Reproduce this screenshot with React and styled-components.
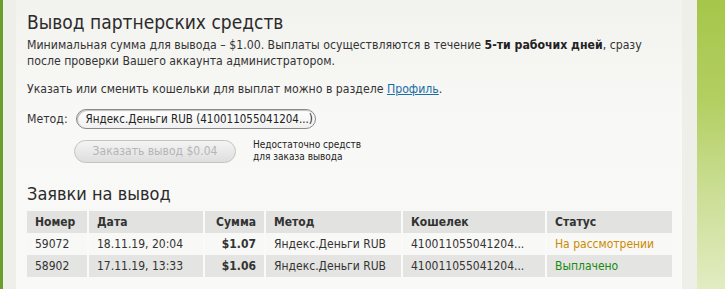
import styled, { createGlobalStyle } from "styled-components";

const GlobalStyle = createGlobalStyle`
  html, body {
    margin: 0;
    padding: 0;
    background: #efefea;
  }
  body {
    font-family: "DejaVu Sans Condensed", "DejaVu Sans", Verdana, sans-serif;
    font-size: 12.2px;
    color: #333;
  }
`;

const columns = [
  { title: "Номер", width: 61 },
  { title: "Дата", width: 116 },
  { title: "Сумма", width: 61, right: true },
  { title: "Метод", width: 137 },
  { title: "Кошелек", width: 144 },
  { title: "Статус", width: 126 },
];

const requests = [
  {
    id: "59072",
    date: "18.11.19, 20:04",
    sum: "$1.07",
    method: "Яндекс.Деньги RUB",
    wallet: "410011055041204...",
    status: "На рассмотрении",
    state: "pending",
  },
  {
    id: "58902",
    date: "17.11.19, 13:33",
    sum: "$1.06",
    method: "Яндекс.Деньги RUB",
    wallet: "410011055041204...",
    status: "Выплачено",
    state: "paid",
  },
];

export default function App() {
  return (
    <>
      <GlobalStyle />
      <Page>
        <LeftEdge />
        <Gutter />
        <Panel>
          <Title>Вывод партнерских средств</Title>
          <Text>
            Минимальная сумма для вывода – $1.00. Выплаты осуществляются в
            течение <b>5-ти рабочих дней</b>, сразу после проверки Вашего
            аккаунта администратором.
          </Text>
          <Text>
            Указать или сменить кошельки для выплат можно в разделе{" "}
            <Link href="#">Профиль</Link>.
          </Text>
          <MethodRow>
            <span>Метод:</span>
            <Select>Яндекс.Деньги RUB (410011055041204...)</Select>
          </MethodRow>
          <OrderRow>
            <OrderButton disabled>Заказать вывод $0.04</OrderButton>
            <Note>
              Недостаточно средств
              <br />
              для заказа вывода
            </Note>
          </OrderRow>
          <SubTitle>Заявки на вывод</SubTitle>
          <Table>
            <colgroup>
              {columns.map((c) => (
                <col key={c.title} style={{ width: c.width }} />
              ))}
            </colgroup>
            <thead>
              <tr>
                {columns.map((c) => (
                  <Th key={c.title} $right={c.right}>
                    {c.title}
                  </Th>
                ))}
              </tr>
            </thead>
            <tbody>
              {requests.map((r, i) => (
                <Row key={r.id} $odd={i % 2 === 1}>
                  <Td>{r.id}</Td>
                  <Td>{r.date}</Td>
                  <Td $right>
                    <b>{r.sum}</b>
                  </Td>
                  <Td>{r.method}</Td>
                  <Td>{r.wallet}</Td>
                  <Td>
                    <Status $state={r.state}>{r.status}</Status>
                  </Td>
                </Row>
              ))}
            </tbody>
          </Table>
        </Panel>
        <Gutter $right />
        <RightEdge />
      </Page>
    </>
  );
}

const Page = styled.div`
  display: flex;
  width: 725px;
  height: 289px;
  overflow: hidden;
`;

const LeftEdge = styled.div`
  width: 3px;
  background: #6a9e2c;
  flex-shrink: 0;
`;

const Gutter = styled.div`
  width: ${(p) => (p.$right ? "15px" : "13px")};
  background: #efefea;
  flex-shrink: 0;
`;

const RightEdge = styled.div`
  flex: 1;
  background: linear-gradient(
    to bottom,
    #a6c64a 0%,
    #b3cf62 35%,
    #cadd92 65%,
    #e2ecc2 100%
  );
`;

const Panel = styled.div`
  width: 666px;
  flex-shrink: 0;
  padding: 10px 10px 0 11px;
  box-sizing: border-box;
  background: linear-gradient(to bottom, #f2f2ee 0%, #f8f8f6 40%, #f9f9f7 100%);
`;

const Title = styled.h1`
  margin: 0 0 3px;
  font-family: "DejaVu Sans Condensed", "DejaVu Sans", Verdana, sans-serif;
  font-size: 19px;
  font-weight: normal;
  color: #2b2b2b;
  line-height: 24px;
`;

const Text = styled.p`
  margin: 0 0 12px;
  line-height: 16px;
  width: 630px;

  b {
    color: #222;
  }
`;

const Link = styled.a`
  color: #1a6ea5;
`;

const MethodRow = styled.div`
  display: flex;
  align-items: center;
  gap: 8px;
  margin-top: 11px;
`;

const Select = styled.div`
  width: 240px;
  height: 20px;
  box-sizing: border-box;
  border: 1px solid #8a8a8a;
  border-radius: 10px;
  background: linear-gradient(to bottom, #ffffff, #f0f0f0);
  box-shadow: inset 1px 1px 1px rgba(0, 0, 0, 0.25);
  padding: 0 6px 0 9px;
  line-height: 18px;
  font-size: 11.5px;
  color: #222;
  white-space: nowrap;
  overflow: hidden;
`;

const OrderRow = styled.div`
  display: flex;
  align-items: center;
  gap: 17px;
  margin: 10px 0 0 47px;
`;

const OrderButton = styled.button`
  width: 162px;
  height: 23px;
  border: 1px solid #c4c4c4;
  border-radius: 12px;
  background: linear-gradient(to bottom, #f4f4f4, #dedede);
  color: #b5b5b5;
  font-family: inherit;
  font-size: 12px;
  padding: 0;
`;

const Note = styled.div`
  font-size: 10px;
  line-height: 12px;
  color: #222;
`;

const SubTitle = styled.h2`
  margin: 20px 0 6px;
  font-family: "DejaVu Sans Condensed", "DejaVu Sans", Verdana, sans-serif;
  font-size: 18px;
  font-weight: normal;
  color: #2b2b2b;
  line-height: 22px;
`;

const Table = styled.table`
  width: 645px;
  table-layout: fixed;
  border-collapse: collapse;
  font-size: 12px;
`;

const Th = styled.th`
  background: #e2e2e0;
  height: 22px;
  padding: 0 8px;
  text-align: ${(p) => (p.$right ? "right" : "left")};
  font-weight: bold;
  color: #333;
  border-right: 2px solid #fafaf8;

  &:last-child {
    border-right: none;
  }
`;

const Row = styled.tr`
  background: ${(p) => (p.$odd ? "#e4e4e2" : "#f8f8f6")};
`;

const Td = styled.td`
  height: 22px;
  padding: 0 8px;
  text-align: ${(p) => (p.$right ? "right" : "left")};
  border-right: 2px solid #fafaf8;
  white-space: nowrap;
  overflow: hidden;

  &:last-child {
    border-right: none;
  }
`;

const Status = styled.span`
  color: ${(p) => (p.$state === "paid" ? "#178a10" : "#cc8a00")};
`;
